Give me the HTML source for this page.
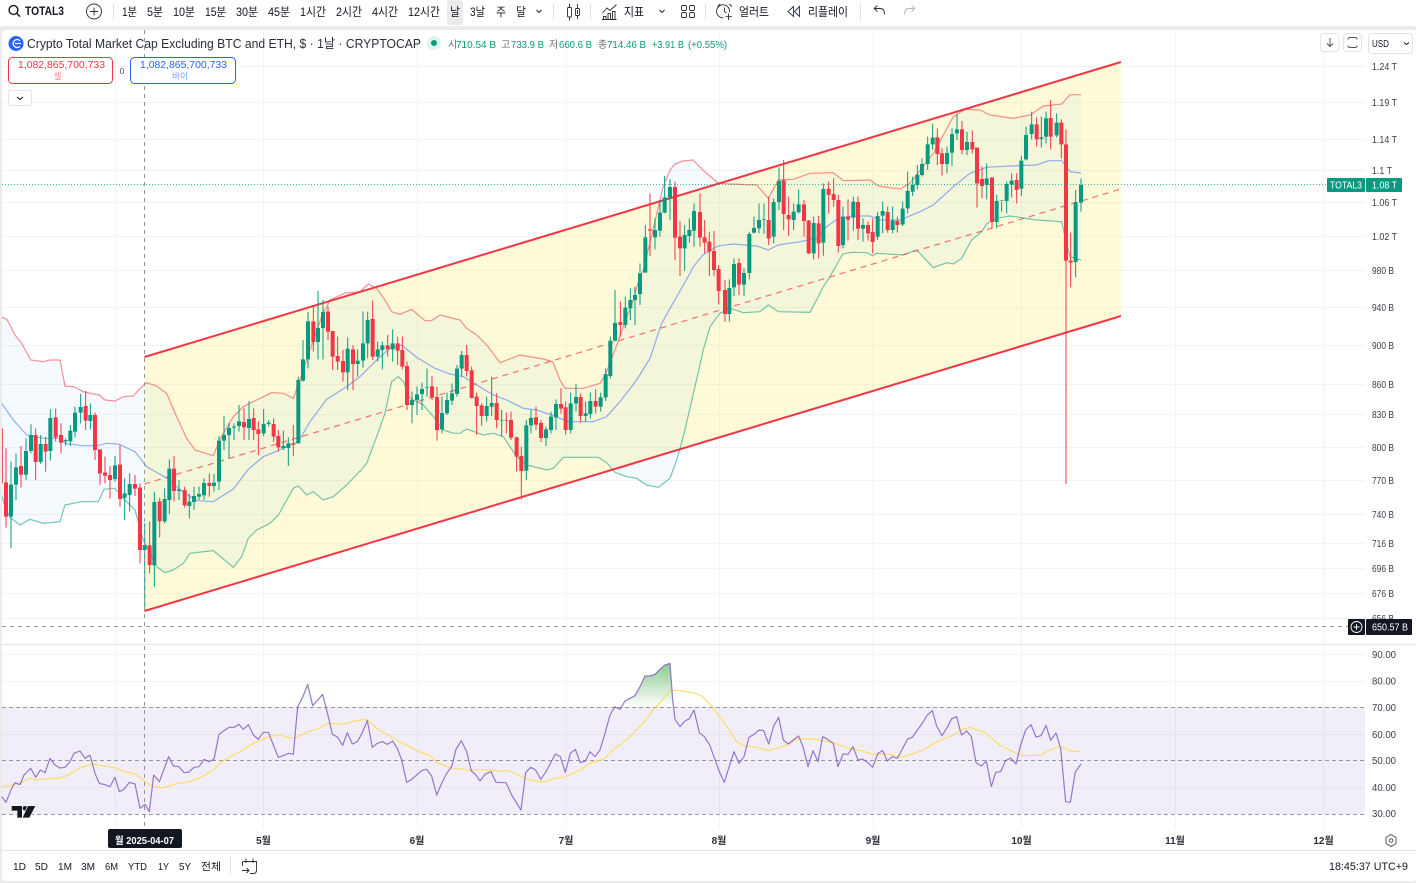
<!DOCTYPE html>
<html><head><meta charset="utf-8"><title>TOTAL3</title>
<style>
html,body{margin:0;padding:0;background:#ebebeb;overflow:hidden}
svg{display:block}
text{font-family:"Liberation Sans","Noto Sans CJK KR",sans-serif;fill:#131722}
.t{font-size:12px;text-anchor:start}
.a{font-size:10px;fill:#3a3e4a}
.m{font-size:10px;font-weight:bold;text-anchor:middle;fill:#2a2e39}
.b{font-size:10.5px}
.g{fill:#089981;font-size:10px}
.l{fill:#6a6d78;font-size:10px}
.ic{fill:none;stroke:#2a2e39;stroke-width:.9}
</style></head><body>
<svg xmlns="http://www.w3.org/2000/svg" width="1416" height="883" viewBox="0 0 1416 883">
<defs>
<clipPath id="mp"><rect x="2" y="30" width="1363" height="614"/></clipPath>
<linearGradient id="gr1" gradientUnits="userSpaceOnUse" x1="0" y1="70" x2="0" y2="202"><stop offset="0" stop-color="#4caf50" stop-opacity=".65"/><stop offset="1" stop-color="#4caf50" stop-opacity="0"/></linearGradient>
<linearGradient id="gr2" gradientUnits="userSpaceOnUse" x1="0" y1="133" x2="0" y2="202"><stop offset="0" stop-color="#4caf50" stop-opacity=".15"/><stop offset="1" stop-color="#4caf50" stop-opacity="0"/></linearGradient>
</defs>
<rect width="1416" height="883" fill="#ebebeb"/>
<rect width="1416" height="26" fill="#fff"/>
<rect x="2" y="30" width="1414" height="851" rx="3" fill="#fff"/>

<!-- toolbar -->
<g fill="none" stroke="#131722" stroke-width="1.4"><circle cx="13.5" cy="10" r="4.4"/><path d="M16.8 13.3L20 16.6"/></g>
<text x="25" y="15" font-size="11.5" font-weight="bold" textLength="39" lengthAdjust="spacingAndGlyphs">TOTAL3</text>
<g class="ic"><circle cx="94" cy="11.5" r="7.5"/><path d="M94 7.5V15.5M90 11.5H98"/></g>
<path d="M113.5 3V20M553.5 3V20M590.5 3V20M705.5 3V20M860.5 3V20" stroke="#e0e3eb"/>
<rect x="447" y="0" width="16" height="25" rx="3" fill="#ebebeb"/>
<g class="t">
<text x="122" y="16" class="t" textLength="15" lengthAdjust="spacingAndGlyphs">1분</text>
<text x="147" y="16" class="t" textLength="16" lengthAdjust="spacingAndGlyphs">5분</text>
<text x="173" y="16" class="t" textLength="22" lengthAdjust="spacingAndGlyphs">10분</text>
<text x="205" y="16" class="t" textLength="21" lengthAdjust="spacingAndGlyphs">15분</text>
<text x="236" y="16" class="t" textLength="22" lengthAdjust="spacingAndGlyphs">30분</text>
<text x="268" y="16" class="t" textLength="22" lengthAdjust="spacingAndGlyphs">45분</text>
<text x="300" y="16" class="t" textLength="26" lengthAdjust="spacingAndGlyphs">1시간</text>
<text x="336" y="16" class="t" textLength="26" lengthAdjust="spacingAndGlyphs">2시간</text>
<text x="372" y="16" class="t" textLength="26" lengthAdjust="spacingAndGlyphs">4시간</text>
<text x="408" y="16" class="t" textLength="32" lengthAdjust="spacingAndGlyphs">12시간</text>
<text x="450" y="16" class="t" textLength="10" lengthAdjust="spacingAndGlyphs">날</text>
<text x="470" y="16" class="t" textLength="15" lengthAdjust="spacingAndGlyphs">3날</text>
<text x="496" y="16" class="t" textLength="10" lengthAdjust="spacingAndGlyphs">주</text>
<text x="516" y="16" class="t" textLength="10" lengthAdjust="spacingAndGlyphs">달</text>
<text x="624" y="16" class="t" textLength="20" lengthAdjust="spacingAndGlyphs">지표</text>
<text x="739" y="16" class="t" textLength="30" lengthAdjust="spacingAndGlyphs">얼러트</text>
<text x="808" y="16" class="t" textLength="40" lengthAdjust="spacingAndGlyphs">리플레이</text>
</g>
<path d="M536.5 10l2.5 2.5 2.5-2.5M659.5 10l2.5 2.5 2.5-2.5" fill="none" stroke="#131722" stroke-width=".9"/>
<!-- candles icon -->
<g class="ic"><path d="M569.5 3.500V20.500M577.500 4V19"/><rect x="567.500" y="7.500" width="4" height="9.500" rx="1" fill="#fff"/><rect x="575.500" y="8.500" width="4" height="7" rx="1" fill="#fff"/><rect x="577" y="10" width="1" height="4" fill="#2a2e39" stroke="none"/></g>
<!-- indicator icon -->
<g class="ic"><path d="M602.500 13l4.500-5 3 2.500 6.500-6"/><path d="M603.500 19.500v-3h2.500v3M608 19.500v-6h2.500v6M612.500 19.500v-8h2.500v8M602 19.500h14.500"/></g>
<!-- grid icon -->
<g class="ic"><rect x="681.500" y="5.500" width="5" height="5" rx="1.500"/><rect x="689.500" y="5.500" width="5" height="5" rx="1.500"/><rect x="681.500" y="12.500" width="5" height="5" rx="1.500"/><rect x="689.500" y="12.500" width="5" height="5" rx="1.500"/></g>
<!-- alert -->
<g class="ic"><path d="M729.500 12.200A6.500 6.500 0 1 0 723.500 17.800"/><path d="M724.500 7.500v4l2 1.500M717.500 6.500l2.800-2.500M732 6.500l-2.800-2.500M728.500 13.500v6.500M725.500 16.700h6.500"/></g>
<!-- replay -->
<g class="ic"><path d="M793.500 6.500l-5.500 5 5.500 5zM799.500 6.500l-5 5 5 5z"/></g>
<!-- undo / redo -->
<g fill="none" stroke="#2a2e39" stroke-width=".9"><path d="M874 8.500l3.500-3M874 8.500l3.500 3M874 8.500h6.500c2.500 0 4 2 4 6"/></g>
<g fill="none" stroke="#b2b5be" stroke-width=".9"><path d="M915 8.500l-3.500-3M915 8.500l-3.500 3M915 8.500h-6.500c-2.500 0-4 2-4 6"/></g>

<!-- grid -->
<g stroke="#f2f3f7">
<path d="M2 66.500H1365M2 102.500H1365M2 139.500H1365M2 170.500H1365M2 202.500H1365M2 236.500H1365M2 270.500H1365M2 307.500H1365M2 345.500H1365M2 384.500H1365M2 414.500H1365M2 447.500H1365M2 480.500H1365M2 514.500H1365M2 543.500H1365M2 568.500H1365M2 593.500H1365M2 618.500H1365"/>
<path d="M2 654.500H1365M2 681.500H1365M2 734.500H1365M2 787.500H1365"/>
<path d="M115.500 30V828M263.500 30V828M417.500 30V828M566 30V828M719.500 30V828M873 30V828M1021.500 30V828M1175.500 30V828M1323.500 30V828"/>
</g>

<g clip-path="url(#mp)">
<!-- channel -->
<polygon points="144.500,357 1121,62 1121,316 144.500,611" fill="#ffeb3b" fill-opacity=".2"/>
<!-- BB fills -->
<g fill="#2196f3" fill-opacity=".05">
<polygon transform="translate(0 310) scale(.33333)" points="5,26 10,22 22,30 45,75 65,100 92,150 130,155 150,150 180,150 195,228 222,230 250,245 280,252 298,255 315,270 345,273 370,260 400,258 420,235 440,218 470,228 500,250 530,320 560,385 585,420 640,437 655,400 670,370 700,320 730,290 770,270 815,248 850,250 880,265 900,210 920,150 940,90 965,20 975,0 990,-30 1035,-51 1080,-55 1080,483 1040,525 1000,560 970,570 940,545 920,555 895,528 880,535 835,615 810,640 770,660 745,685 725,740 700,772 640,722 570,730 550,760 520,780 495,788 470,770 430,690 405,600 370,565 345,535 312,538 295,575 245,575 195,585 180,635 130,640 90,628 60,645 30,622 15,590 5,555"/>
<polygon transform="translate(360 270) scale(.33333)" points="0,65 25,42 50,55 75,90 95,125 120,133 155,118 195,152 215,152 240,135 300,150 320,175 350,195 380,225 420,278 480,255 550,267 578,275 600,330 615,355 670,355 720,340 737,312 765,240 790,170 820,90 835,35 850,0 879,-120 909,-249 930,-300 945,-318 969,-327 999,-330 1035,-294 1074,-261 1080,-261 1080,130 1050,170 1030,240 1005,350 970,500 950,570 930,625 895,652 860,645 830,625 800,620 765,607 740,578 715,562 610,562 580,595 560,600 500,585 470,560 430,500 400,490 370,495 320,477 300,490 280,490 250,480 220,440 190,405 150,385 130,335 115,320 95,335 75,430 50,500 20,580 0,605"/>
<polygon transform="translate(720 90) scale(.33333)" points="0,280 30,282 110,285 145,325 175,270 220,268 270,250 340,248 370,272 450,270 475,288 540,297 570,280 640,190 700,80 735,58 780,60 810,75 880,85 930,75 970,48 1025,42 1050,14 1083,14 1083,510 1050,500 1035,440 1025,395 950,390 870,378 830,385 800,402 785,425 755,450 725,505 700,522 680,518 640,533 590,480 550,495 470,490 457,497 440,488 395,487 368,492 330,560 310,590 295,620 270,667 175,665 145,645 120,665 70,668 30,655 0,670"/>
</g>
<!-- BB lines -->
<g fill="none" stroke-width="3.6">
<g transform="translate(0 310) scale(.33333)">
<polyline stroke="#f23645" stroke-opacity=".55" points="5,26 10,22 22,30 45,75 65,100 92,150 130,155 150,150 180,150 195,228 222,230 250,245 280,252 298,255 315,270 345,273 370,260 400,258 420,235 440,218 470,228 500,250 530,320 560,385 585,420 640,437 655,400 670,370 700,320 730,290 770,270 815,248 850,250 880,265 900,210 920,150 940,90 965,20 975,0 990,-30 1035,-51 1080,-55"/>
<polyline stroke="#2962ff" stroke-opacity=".5" points="5,280 40,330 80,375 130,385 180,385 195,400 245,407 290,407 320,400 355,402 405,425 440,470 510,510 540,540 590,572 640,575 700,537 745,478 790,440 850,415 895,395 930,335 980,268 1040,230 1080,200"/>
<polyline stroke="#089981" stroke-opacity=".55" points="5,555 15,590 30,622 60,645 90,628 130,640 180,635 195,585 245,575 295,575 312,538 345,535 370,565 405,600 430,690 470,770 495,788 520,780 550,760 570,730 640,722 700,772 725,740 745,685 770,660 810,640 835,615 880,535 895,528 920,555 940,545 970,570 1000,560 1040,525 1080,483"/>
</g>
<g transform="translate(360 270) scale(.33333)">
<polyline stroke="#f23645" stroke-opacity=".55" points="0,65 25,42 50,55 75,90 95,125 120,133 155,118 195,152 215,152 240,135 300,150 320,175 350,195 380,225 420,278 480,255 550,267 578,275 600,330 615,355 670,355 720,340 737,312 765,240 790,170 820,90 835,35 850,0 879,-120 909,-249 930,-300 945,-318 969,-327 999,-330 1035,-294 1074,-261 1080,-261"/>
<polyline stroke="#2962ff" stroke-opacity=".5" points="0,320 50,270 90,235 125,225 170,262 225,295 270,312 310,320 350,345 400,375 440,390 490,415 530,420 575,435 625,455 700,455 740,440 780,395 830,330 870,265 905,160 950,80 990,10 1000,-10 1029,-45 1074,-72 1080,-72"/>
<polyline stroke="#089981" stroke-opacity=".55" points="0,605 20,580 50,500 75,430 95,335 115,320 130,335 150,385 190,405 220,440 250,480 280,490 300,490 320,477 370,495 400,490 430,500 470,560 500,585 560,600 580,595 610,562 715,562 740,578 765,607 800,620 830,625 860,645 895,652 930,625 950,570 970,500 1005,350 1030,240 1050,170 1080,130"/>
</g>
<g transform="translate(720 90) scale(.33333)">
<polyline stroke="#f23645" stroke-opacity=".55" points="0,280 30,282 110,285 145,325 175,270 220,268 270,250 340,248 370,272 450,270 475,288 540,297 570,280 640,190 700,80 735,58 780,60 810,75 880,85 930,75 970,48 1025,42 1050,14 1083,14"/>
<polyline stroke="#2962ff" stroke-opacity=".5" points="0,467 40,462 110,468 145,480 175,465 240,455 290,445 320,410 355,385 400,378 450,378 480,390 540,390 600,365 640,345 700,290 750,250 800,232 870,228 950,225 985,212 1025,212 1050,245 1083,249"/>
<polyline stroke="#089981" stroke-opacity=".55" points="0,670 30,655 70,668 120,665 145,645 175,665 270,667 295,620 310,590 330,560 368,492 395,487 440,488 457,497 470,490 550,495 590,480 640,533 680,518 700,522 725,505 755,450 785,425 800,402 830,385 870,378 950,390 1025,395 1035,440 1050,500 1083,510"/>
</g>
</g>
<!-- channel lines -->
<path d="M144.500 484L1121 189" stroke="#f23645" stroke-opacity=".7" stroke-width="1.200" stroke-dasharray="6 5" fill="none"/>
<path d="M144.500 357L1121 62M144.500 611L1121 316" stroke="#f23645" stroke-width="2" fill="none"/>

<!-- candles A -->
<g transform="translate(0 310) scale(.33333)" fill="none">
<path stroke="#f23645" stroke-width="3" d="M7 355V520M18 415V653M63 408V532M107 355V510M137 380V485M167 296V395M183 340V430M257 243V360M285 308V450M300 418V525M315 440V520M330 468V565M360 405V590M405 495V558M420 520V760M449 635V790M479 563V682M522 438V574M554 530V592M628 490V560M732 295V390M761 295V390M775 335V435M821 325V395M835 360V425M880 345V438M940 -15V125M984 -10V90M998 63V180M1013 80V180M1029 120V215M1059 105V240"/>
<path stroke="#f23645" stroke-width="12" d="M18 517V620M63 468V494M107 375V456M137 402V425M167 322V382M183 375V398M257 288V332M285 315V420M300 418V490M315 488V497M330 495V510M360 464V567M405 522V536M420 533V720M449 706V765M479 574V634M522 476V543M554 540V586M628 519V528M732 336V352M761 324V360M775 358V372M821 342V380M835 378V412M880 400V404M940 34V96M984 5V65M998 63V140M1013 138V155M1029 153V187M1059 118V162"/>
<path stroke="#089981" stroke-width="3" d="M33 455V715M48 430V570M78 385V510M93 343V430M122 375V462M151 298V452M197 385V408M211 345V408M225 290V382M242 252V340M271 280V358M345 438V515M374 505V630M389 490V605M434 640V900M463 545V830M494 535V640M508 448V612M537 510V570M568 552V625M582 530V600M597 530V570M612 505V570M642 492V545M657 378V540M672 318V420M687 338V445M702 340V390M717 285V365M747 273V390M791 297V378M806 330V350M850 362V420M865 382V468M895 200V400M909 90V215M924 6V175M954 -57V148M969 -30V148M1043 82V240M1073 118V200"/>
<path stroke="#089981" stroke-width="12" d="M33 524V620M48 472V524M78 423V494M93 375V423M122 402V456M151 324V423M197 390V394M211 362V394M225 308V365M242 291V308M271 315V333M345 466V507M374 550V563M389 522V555M434 705V720M463 576V766M494 567V634M508 476V570M537 538V543M568 575V588M582 558V576M597 552V560M612 519V556M642 518V528M657 392V515M672 375V392M687 354V375M702 350V353M717 334V348M747 327V354M791 342V370M806 338V342M850 408V414M865 400V414M895 210V400M909 148V212M924 34V148M954 54V96M969 6V54M1043 116V187M1073 152V162"/>
</g>
<!-- candles B -->
<g transform="translate(360 270) scale(.33333)" fill="none">
<path stroke="#f23645" stroke-width="3" d="M38 92V270M83 195V260M113 200V285M127 200V298M141 275V420M216 318V390M231 350V512M320 225V320M335 290V385M350 368V495M365 400V468M410 370V475M439 428V490M453 425V510M470 500V605M484 530V688M528 410V480M543 450V516M603 355V430M617 395V493M662 370V458M707 358V430M781 95V200"/>
<path stroke="#f23645" stroke-width="12" d="M38 147V260M83 226V238M113 220V242M127 240V290M141 288V405M216 349V382M231 381V480M320 255V303M335 301V384M350 380V408M365 406V438M410 399V450M439 450V452M453 450V503M470 502V560M484 558V603M528 442V464M543 459V504M603 402V416M617 412V480M662 381V438M707 393V410M781 156V165"/>
<path stroke="#089981" stroke-width="3" d="M9 125V293M23 125V265M53 215V275M67 215V298M98 178V275M156 365V460M171 350V435M186 338V420M201 296V380M246 380V490M261 368V435M276 340V405M291 285V380M305 243V320M380 380V455M395 320V438M425 420V500M499 450V630M513 420V490M558 470V528M573 425V490M588 388V480M632 368V490M648 342V425M677 395V455M691 368V445M722 368V425M737 295V393M751 200V325M765 60V215M796 80V175M811 55V150M825 50V165M840 -20V105"/>
<path stroke="#089981" stroke-width="12" d="M9 220V272M23 150V220M53 238V260M67 226V240M98 220V238M156 390V405M171 373V390M186 357V372M201 351V353M246 429V478M261 390V430M276 370V392M291 296V372M305 255V296M380 408V438M395 399V410M425 450V452M499 466V602M513 444V466M558 478V504M573 440V480M588 402V442M632 400V480M648 381V400M677 430V438M691 393V432M722 382V410M737 312V382M751 212V318M765 159V212M796 113V165M811 90V115M825 75V90M840 10V72"/>
</g>
<!-- candles D -->
<g transform="translate(620 150) scale(.33333)" fill="none">
<path stroke="#f23645" stroke-width="3" d="M90 130V318M165 95V330M180 213V378M240 130V290M254 210V310M268 245V378M282 243V378M296 345V463"/>
<path stroke="#f23645" stroke-width="12" d="M90 238V242M165 111V263M180 260V295M240 186V263M254 262V278M268 275V305M282 303V360M296 357V423"/>
<path stroke="#089981" stroke-width="3" d="M76 225V368M105 205V298M120 150V260M134 78V190M150 88V210M194 225V362M208 205V278M222 160V290"/>
<path stroke="#089981" stroke-width="12" d="M76 262V368M105 240V262M120 188V242M134 142V188M150 111V142M194 255V295M208 240V258M222 183V242"/>
</g>
<!-- candles C -->
<g transform="translate(720 90) scale(.33333)" fill="none">
<path stroke="#f23645" stroke-width="3" d="M15 570V695M57 505V615M146 320V465M191 210V420M206 320V438M252 330V440M266 390V492M296 378V505M326 275V370M341 265V350M355 315V488M384 328V452M414 320V450M444 395V452M458 385V490M503 350V428M532 380V428M652 115V225M666 175V256M726 93V192M757 122V190M771 173V353M786 230V325M816 262V415M890 250V340M950 82V170M992 30V178M1024 88V205M1038 118V1182M1052 428V592"/>
<path stroke="#f23645" stroke-width="12" d="M15 600V672M57 519V584M146 390V446M191 271V372M206 375V388M252 343V393M266 392V490M296 400V460M326 296V315M341 312V330M355 330V468M384 380V389M414 336V416M444 405V430M458 426V456M503 366V420M532 393V405M652 142V192M666 190V222M726 118V180M757 156V178M771 173V280M786 267V288M816 262V396M890 270V300M950 103V148M992 84V140M1024 98V163M1038 163V512M1052 512V518"/>
<path stroke="#089981" stroke-width="3" d="M28 568V695M42 506V618M72 535V618M88 425V568M102 380V430M117 340V430M132 340V432M161 325V460M177 232V360M221 340V420M236 298V370M281 380V508M310 280V497M369 350V475M400 320V422M429 385V455M473 365V450M488 335V430M518 350V430M548 335V408M563 245V370M578 260V318M592 225V298M606 205V260M623 140V240M638 102V180M681 170V250M696 115V228M711 72V150M741 125V195M800 220V328M830 315V415M845 335V365M860 275V370M875 250V322M904 197V318M918 110V212M935 65V148M964 80V172M978 65V160M1010 70V142M1067 300V562M1083 265V365"/>
<path stroke="#089981" stroke-width="12" d="M28 594V672M42 522V592M72 549V584M88 432V549M102 414V428M117 390V415M132 388V390M161 336V440M177 273V336M221 365V390M236 343V367M281 399V490M310 297V458M369 380V465M400 335V383M429 405V416M473 378V440M488 363V377M518 392V420M548 356V403M563 303V355M578 285V305M592 254V285M606 222V255M623 163V222M638 143V163M681 189V222M696 132V188M711 118V130M741 156V180M800 265V285M830 333V396M845 330V332M860 282V333M875 272V284M904 212V296M918 135V208M935 103V132M964 142V147M978 85V140M1010 98V136M1067 336V516M1083 285V338"/>
</g>
</g>

<!-- crosshair + dotted -->
<path d="M2 184.500H1327" stroke="#089981" stroke-dasharray="1 2" stroke-opacity=".75"/>
<path d="M2 626.500H1348" stroke="#9598a1" stroke-dasharray="4 4"/>
<path d="M144.500 30V828" stroke="#9598a1" stroke-dasharray="4 4"/>
<path d="M2 644.500H1416" stroke="#e0e3eb"/>

<!-- RSI -->
<rect x="2" y="707" width="1363" height="107" fill="#7e57c2" fill-opacity=".1"/>
<path d="M2 707.500H1365M2 760.500H1365M2 814.500H1365" stroke="#9598a1" stroke-dasharray="4 3"/>
<g transform="translate(480 640) scale(.33333)"><polygon fill="url(#gr1)" points="400,202 405,200 420,202 430,202 435,183 450,175 465,167 480,140 495,108 510,108 525,103 540,88 555,75 570,70 578,180 579,202"/></g>
<g transform="translate(0 640) scale(.33333)"><polygon fill="url(#gr2)" points="893,202 908,172 923,133 938,197 950,183 968,163 981,202"/></g>
<g fill="none" stroke-width="3.6" stroke-linejoin="round">
<g transform="translate(0 640) scale(.33333)">
<polyline stroke="#fdd835" stroke-opacity=".75" points="5,441 30,437 60,430 90,414 110,420 140,416 180,414 205,405 225,392 250,380 280,372 310,378 345,383 365,392 405,402 430,420 450,436 485,444 510,437 535,429 555,428 600,414 640,390 660,370 690,350 720,335 760,310 810,289 840,286 880,295 925,275 950,268 985,250 1030,253 1060,244 1090,238 1105,242 1130,265 1185,297 1250,332 1290,347 1310,367 1355,385 1410,390 1440,389"/>
<polyline stroke="#7e57c2" stroke-opacity=".8" points="5,470 18,487 35,445 45,428 60,434 72,405 92,385 107,412 121,390 135,398 150,355 165,375 180,384 195,382 210,365 222,340 240,333 255,355 270,345 285,400 298,430 315,434 330,440 345,412 358,455 372,448 388,427 405,432 420,505 435,493 448,515 461,405 478,425 506,350 520,378 537,380 552,398 567,396 582,382 597,380 612,358 627,365 642,358 657,283 672,272 687,262 702,262 717,253 730,268 745,254 760,285 775,298 790,277 805,277 820,315 835,352 850,347 865,340 880,343 893,200 908,172 923,133 938,197 953,180 968,163 985,230 997,282 1013,292 1028,316 1042,278 1057,312 1072,305 1087,278 1102,242 1117,322 1132,310 1147,305 1162,313 1178,303 1192,325 1205,360 1220,427 1235,418 1265,392 1280,388 1295,408 1310,465 1325,430 1340,400 1355,380 1368,328 1384,302 1400,335 1414,393 1428,405 1440,423"/>
</g>
<g transform="translate(480 640) scale(.33333)">
<polyline stroke="#fdd835" stroke-opacity=".75" points="0,389 30,390 60,393 85,392 120,408 150,420 190,426 225,415 255,411 300,390 330,369 370,358 405,325 445,295 490,248 520,210 570,153 590,151 640,158 665,168 695,198 740,258 770,305 790,317 830,322 865,332 915,318 950,297 1000,297 1060,308 1105,325 1145,332 1175,343 1225,342 1265,352 1295,343 1330,330 1370,305 1420,285 1440,272"/>
<polyline stroke="#7e57c2" stroke-opacity=".8" points="0,423 15,403 33,395 48,427 78,428 95,465 123,510 137,398 152,382 167,390 182,418 197,397 226,342 241,350 256,397 271,340 286,328 301,368 316,363 330,335 345,350 360,330 375,280 390,225 405,200 420,208 435,183 450,175 465,167 480,140 495,108 510,108 525,103 540,88 555,75 570,70 578,180 585,238 600,260 615,243 628,236 642,210 658,278 673,290 688,313 703,353 718,395 733,427 748,378 762,335 777,370 792,350 807,292 822,283 837,270 851,272 866,312 881,258 896,232 910,300 925,312 940,300 956,288 969,320 984,380 999,332 1014,365 1028,290 1043,298 1060,310 1074,380 1089,342 1104,343 1119,320 1134,360 1148,357 1163,367 1178,382 1194,340 1208,332 1222,363 1237,350 1252,355 1267,327 1283,297 1297,292 1312,270 1327,250 1342,225 1357,212 1370,258 1386,287 1400,265 1415,236 1430,230 1440,270"/>
</g>
<g transform="translate(960 600) scale(.33333)">
<polyline stroke="#fdd835" stroke-opacity=".75" points="0,390 30,382 75,398 122,438 170,460 190,467 240,466 260,455 300,438 330,452 363,456"/>
<polyline stroke="#7e57c2" stroke-opacity=".8" points="0,390 5,405 20,393 34,410 48,488 64,498 79,483 94,560 107,517 122,515 137,482 152,474 168,492 182,435 197,390 213,374 228,411 243,407 258,376 272,421 288,399 302,445 317,605 331,607 346,516 363,492"/>
</g>
</g>
<!-- TV logo -->
<g transform="translate(0 640) scale(.33333)" fill="#131722" stroke="#fff" stroke-width="4" paint-order="stroke">
<path d="M35 498H66V533H52V512H35Z"/><circle cx="75" cy="505" r="7"/><path d="M84 498H106L88 533H68Z"/>
</g>

<!-- legend -->
<circle cx="16" cy="43.500" r="7.500" fill="#2962ff"/>
<path d="M20 40.700A4 4 0 1 0 20 46.300M15 43.500H21" fill="none" stroke="#fff" stroke-width="1.300"/>
<text x="27" y="48" font-size="13" textLength="394" lengthAdjust="spacingAndGlyphs" style="fill:#2a2e39">Crypto Total Market Cap Excluding BTC and ETH, $ · 1날 · CRYPTOCAP</text>
<circle cx="434" cy="43" r="7" fill="#e0f3ef"/><circle cx="434" cy="43" r="3" fill="#089981"/>
<text x="448" y="48" class="l">시</text><text x="456" y="48" class="g" textLength="40" lengthAdjust="spacingAndGlyphs">710.54 B</text>
<text x="501" y="48" class="l">고</text><text x="511" y="48" class="g" textLength="33" lengthAdjust="spacingAndGlyphs">733.9 B</text>
<text x="549" y="48" class="l">저</text><text x="559" y="48" class="g" textLength="33" lengthAdjust="spacingAndGlyphs">660.6 B</text>
<text x="598" y="48" class="l">종</text><text x="607" y="48" class="g" textLength="39" lengthAdjust="spacingAndGlyphs">714.46 B</text>
<text x="652" y="48" class="g" textLength="32" lengthAdjust="spacingAndGlyphs">+3.91 B</text>
<text x="688" y="48" class="g" textLength="39" lengthAdjust="spacingAndGlyphs">(+0.55%)</text>

<!-- buy/sell -->
<rect x="8.500" y="57.500" width="104" height="26" rx="4" fill="#fff" stroke="#f23645"/>
<text x="18" y="68" font-size="10" textLength="87" lengthAdjust="spacingAndGlyphs" style="fill:#f23645">1,082,865,700,733</text>
<text x="57.500" y="79" font-size="8.500" text-anchor="middle" style="fill:#f77c80">셀</text>
<text x="122" y="74" font-size="8.500" text-anchor="middle" style="fill:#50535e">0</text>
<rect x="130.500" y="57.500" width="105" height="26" rx="4" fill="#fff" stroke="#2962ff"/>
<text x="140" y="68" font-size="10" textLength="87" lengthAdjust="spacingAndGlyphs" style="fill:#2962ff">1,082,865,700,733</text>
<text x="180" y="79" font-size="8.500" text-anchor="middle" style="fill:#7a9cff">바이</text>
<rect x="8.500" y="90.500" width="23" height="15" rx="2" fill="#fff" stroke="#e0e3eb"/>
<path d="M17 97l3 2.500 3-2.500" fill="none" stroke="#131722" stroke-width="1.100"/>

<!-- top right buttons -->
<rect x="1320.500" y="33.500" width="18.500" height="18" rx="3" fill="#fff" stroke="#e0e3eb"/>
<path d="M1330 38V46M1327 43.500l3 3 3-3" fill="none" stroke="#50535e"/>
<rect x="1343.500" y="33.500" width="18" height="18" rx="3" fill="#fff" stroke="#e0e3eb"/>
<path d="M1348 39.500c0-1.500 1-2 2-2h5c1 0 2 .5 2 2M1348 45.500c0 1.500 1 2 2 2h5c1 0 2-.5 2-2" fill="none" stroke="#50535e"/>
<rect x="1368.500" y="33.500" width="44" height="20" rx="3" fill="#fff" stroke="#e0e3eb"/>
<text x="1372" y="47" font-size="10" textLength="17" lengthAdjust="spacingAndGlyphs">USD</text>
<path d="M1404 42.500l2.500 2 2.500-2" fill="none" stroke="#131722"/>

<!-- price axis -->
<g class="a">
<text class="a" x="1372" y="70" textLength="25" lengthAdjust="spacingAndGlyphs">1.24 T</text>
<text class="a" x="1372" y="106" textLength="25" lengthAdjust="spacingAndGlyphs">1.19 T</text>
<text class="a" x="1372" y="143" textLength="25" lengthAdjust="spacingAndGlyphs">1.14 T</text>
<text class="a" x="1372" y="174" textLength="20" lengthAdjust="spacingAndGlyphs">1.1 T</text>
<text class="a" x="1372" y="206" textLength="25" lengthAdjust="spacingAndGlyphs">1.06 T</text>
<text class="a" x="1372" y="240" textLength="25" lengthAdjust="spacingAndGlyphs">1.02 T</text>
<text class="a" x="1372" y="274" textLength="22" lengthAdjust="spacingAndGlyphs">980 B</text>
<text class="a" x="1372" y="311" textLength="22" lengthAdjust="spacingAndGlyphs">940 B</text>
<text class="a" x="1372" y="349" textLength="22" lengthAdjust="spacingAndGlyphs">900 B</text>
<text class="a" x="1372" y="388" textLength="22" lengthAdjust="spacingAndGlyphs">860 B</text>
<text class="a" x="1372" y="418" textLength="22" lengthAdjust="spacingAndGlyphs">830 B</text>
<text class="a" x="1372" y="451" textLength="22" lengthAdjust="spacingAndGlyphs">800 B</text>
<text class="a" x="1372" y="484" textLength="22" lengthAdjust="spacingAndGlyphs">770 B</text>
<text class="a" x="1372" y="518" textLength="22" lengthAdjust="spacingAndGlyphs">740 B</text>
<text class="a" x="1372" y="547" textLength="22" lengthAdjust="spacingAndGlyphs">716 B</text>
<text class="a" x="1372" y="572" textLength="22" lengthAdjust="spacingAndGlyphs">696 B</text>
<text class="a" x="1372" y="597" textLength="22" lengthAdjust="spacingAndGlyphs">676 B</text>
<text class="a" x="1372" y="622" textLength="22" lengthAdjust="spacingAndGlyphs">656 B</text>
<text class="a" x="1372" y="658" textLength="24" lengthAdjust="spacingAndGlyphs">90.00</text>
<text class="a" x="1372" y="684.500" textLength="24" lengthAdjust="spacingAndGlyphs">80.00</text>
<text class="a" x="1372" y="711" textLength="24" lengthAdjust="spacingAndGlyphs">70.00</text>
<text class="a" x="1372" y="738" textLength="24" lengthAdjust="spacingAndGlyphs">60.00</text>
<text class="a" x="1372" y="764" textLength="24" lengthAdjust="spacingAndGlyphs">50.00</text>
<text class="a" x="1372" y="791" textLength="24" lengthAdjust="spacingAndGlyphs">40.00</text>
<text class="a" x="1372" y="817" textLength="24" lengthAdjust="spacingAndGlyphs">30.00</text>
</g>
<rect x="1327" y="178" width="38" height="14" rx="1" fill="#089981"/>
<rect x="1366" y="178" width="36" height="14" rx="1" fill="#089981"/>
<text x="1330" y="188.500" font-size="10" textLength="32" lengthAdjust="spacingAndGlyphs" style="fill:#fff">TOTAL3</text>
<text x="1372" y="188.500" font-size="10" textLength="25" lengthAdjust="spacingAndGlyphs" style="fill:#fff">1.08 T</text>
<rect x="1348" y="619" width="17" height="16" rx="1" fill="#131722"/>
<circle cx="1356.500" cy="627" r="5.500" fill="none" stroke="#fff" stroke-width=".9"/>
<path d="M1356.500 624V630M1353.500 627H1359.500" stroke="#fff" stroke-width=".9"/>
<rect x="1366" y="619" width="46" height="16" rx="1" fill="#131722"/>
<text x="1372" y="630.500" font-size="10" textLength="36" lengthAdjust="spacingAndGlyphs" style="fill:#fff">650.57 B</text>

<!-- time axis -->
<text class="m" x="263.500" y="844">5월</text>
<text class="m" x="417" y="844">6월</text>
<text class="m" x="566" y="844">7월</text>
<text class="m" x="719" y="844">8월</text>
<text class="m" x="873" y="844">9월</text>
<text class="m" x="1021.500" y="844">10월</text>
<text class="m" x="1175" y="844">11월</text>
<text class="m" x="1323.500" y="844">12월</text>
<rect x="108" y="829" width="74" height="19" rx="2" fill="#131722"/>
<text x="115" y="844" font-size="10" font-weight="bold" textLength="59" lengthAdjust="spacingAndGlyphs" style="fill:#fff">월 2025-04-07</text>
<g fill="none" stroke="#50535e"><path d="M1391 834.500l5 3v6l-5 3-5-3v-6z"/><circle cx="1391" cy="840.500" r="1.800"/></g>
<path d="M2 850.500H1416" stroke="#e0e3eb"/>

<!-- bottom bar -->
<text class="b" x="13" y="870" textLength="13" lengthAdjust="spacingAndGlyphs">1D</text>
<text class="b" x="35" y="870" textLength="13" lengthAdjust="spacingAndGlyphs">5D</text>
<text class="b" x="58" y="870" textLength="14" lengthAdjust="spacingAndGlyphs">1M</text>
<text class="b" x="81" y="870" textLength="14" lengthAdjust="spacingAndGlyphs">3M</text>
<text class="b" x="105" y="870" textLength="13" lengthAdjust="spacingAndGlyphs">6M</text>
<text class="b" x="128" y="870" textLength="19" lengthAdjust="spacingAndGlyphs">YTD</text>
<text class="b" x="158" y="870" textLength="11" lengthAdjust="spacingAndGlyphs">1Y</text>
<text class="b" x="179" y="870" textLength="12" lengthAdjust="spacingAndGlyphs">5Y</text>
<text class="b" x="201" y="870" textLength="20" lengthAdjust="spacingAndGlyphs">전체</text>
<path d="M230.500 857V875" stroke="#e0e3eb"/>
<g class="ic"><path d="M242.500 861.500H256.500V870c0 2-1 3.500-3 3.500H250M242.500 861.500V866M246 858.500V863M253 858.500V863M242 870.500H248.500M246.500 868l2.500 2.500-2.500 2.500"/></g>
<text x="1329" y="870" font-size="11" textLength="79" lengthAdjust="spacingAndGlyphs">18:45:37 UTC+9</text>
</svg>
</body></html>
